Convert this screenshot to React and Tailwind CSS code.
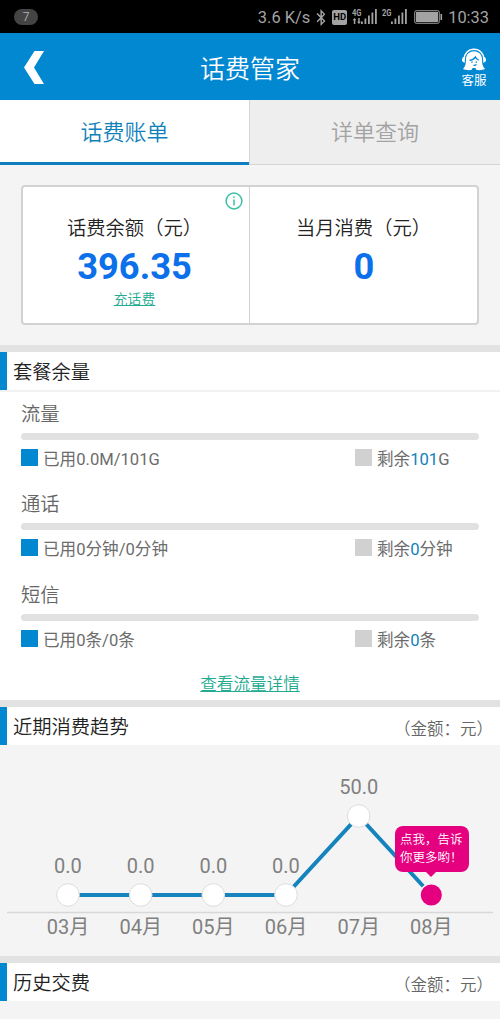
import { FaBluetoothB } from "react-icons/fa";

const usage = [
  { name: "流量", used: "已用0.0M/101G", left: "101", unit: "G" },
  { name: "通话", used: "已用0分钟/0分钟", left: "0", unit: "分钟" },
  { name: "短信", used: "已用0条/0条", left: "0", unit: "条" },
];

const trend = [
  { month: "03月", value: "0.0", x: 68, y: 150 },
  { month: "04月", value: "0.0", x: 140.7, y: 150 },
  { month: "05月", value: "0.0", x: 213.3, y: 150 },
  { month: "06月", value: "0.0", x: 286, y: 150 },
  { month: "07月", value: "50.0", x: 358.7, y: 71 },
  { month: "08月", value: "", x: 431.3, y: 150 },
];

const Signal = ({ label, data }) => (
  <svg className="shrink-0" width="26" height="18" viewBox="0 0 26 18" fill="#a3a3a3">
    <text x="0" y="7.5" fontSize="9.5" fontWeight="700" textLength="9.5" lengthAdjust="spacingAndGlyphs">{label}</text>
    {data && <path d="M2.5 10l2 2.2H3.3V16H1.8v-3.8H.6zM7 16l-2-2.2h1.2V10h1.5v3.8h1.2z" />}
    <rect x="9" y="13.5" width="1.8" height="2.5" />
    <rect x="12.5" y="10.5" width="1.8" height="5.5" />
    <rect x="16" y="7.5" width="1.8" height="8.5" />
    <rect x="19.5" y="4.5" width="1.8" height="11.5" />
    <rect x="23" y="1" width="1.8" height="15" />
  </svg>
);

const StatusBar = () => (
  <div className="flex h-[33px] items-center bg-black pt-px pr-[11px] pl-3.5 text-[#a3a3a3]">
    <div className="flex h-4 w-6 items-center justify-center rounded-full bg-[#444] text-xs">7</div>
    <span className="ml-auto pt-0.5 text-[16.4px]">3.6 K/s</span>
    <FaBluetoothB className="ml-1 h-[17px] w-[14px] shrink-0" />
    <span className="ml-1 flex h-[15px] w-[15px] items-center justify-center rounded-xs bg-[#a3a3a3] text-[9.5px] font-bold text-black">HD</span>
    <div className="ml-[5px] flex gap-1">
      <Signal label="4G" data />
      <Signal label="2G" />
    </div>
    <svg className="ml-1.5 shrink-0" width="29" height="14" viewBox="0 0 29 14" fill="#a3a3a3">
      <rect x=".75" y=".75" width="24.5" height="12.5" rx="1.5" fill="none" stroke="#a3a3a3" />
      <rect x="2" y="2" width="22" height="10" />
      <rect x="26.5" y="4" width="1.6" height="6" />
    </svg>
    <span className="ml-[5px] pt-0.5 text-[16.4px]">10:33</span>
  </div>
);

const Header = () => (
  <header className="grid h-[67px] grid-cols-[100px_1fr_100px] items-center bg-[#0287d1] text-white">
    <svg className="mt-0.5 ml-6" width="21" height="33" viewBox="0 0 21 33" fill="white">
      <path d="M10.5 0H20L10 16.5 20 33h-9.5L0 16.5z" />
    </svg>
    <h1 className="mt-[5px] text-center text-[25px] leading-none font-[350]">话费管家</h1>
    <div className="mr-[13px] flex flex-col items-center justify-self-end pt-1">
      <svg width="26" height="23" viewBox="0 0 26 23">
        <path d="M3.2 11.5C3.2 5 7.5 1.2 13 1.2S22.8 5 22.8 11.5" fill="none" stroke="white" strokeWidth="1.5" />
        <path d="M3.8 8.7C1.8 8.9 1 10.3 1 11.8c0 1.4.8 2.7 2.8 3zM22.2 8.7c2 .2 2.8 1.6 2.8 3.1 0 1.4-.8 2.7-2.8 3z" fill="white" />
        <path d="M13 3.2c-5 0-8 3.6-8 8.2 0 4-.5 6.8-3 9.700 2 1 5.300 1.200 8.500.9l1.100-2h2.800l1.100 2c3.200.3 6.500.1 8.500-.9-2.500-2.900-3-5.700-3-9.700 0-4.600-3-8.200-8-8.200z" fill="white" />
        <path d="M8.500 12.300c2.800-.2 4.700-1.500 6-3.300.7 1.700 1.800 2.600 3.200 3.200" fill="none" stroke="#0287d1" strokeWidth="1.3" />
        <path d="M10.300 14.200h1.400M14.600 14.200H16M12.500 17.200c1.200.3 2.200 0 3-.7" fill="none" stroke="#0287d1" strokeWidth="1.2" />
      </svg>
      <span className="mt-0.5 text-[12.5px] leading-4">客服</span>
    </div>
  </header>
);

const Tabs = () => (
  <div className="flex h-[65px] text-[22px] font-[350]">
    <button className="w-[249px] border-b-3 border-[#0f7fc2] bg-white pt-0.5 text-[#1181ba]">话费账单</button>
    <button className="flex-1 border-b border-l border-[#d5d5d5] bg-[#eee] pt-px text-[#a2a2a2]">详单查询</button>
  </div>
);

const SectionTitle = ({ title, note }) => (
  <div className="flex h-[38px] items-center justify-between border-l-7 border-[#0287d1] bg-white pr-[7px] pl-1.5 font-[350]">
    <h2 className="pt-[5px] text-[19.3px] text-[#222]">{title}</h2>
    {note && <span className="pt-2 text-[16.5px] text-[#666]">{note}</span>}
  </div>
);

const Separator = () => <div className="h-[7px] bg-[#e2e2e2]" />;

const Balance = () => (
  <div className="px-[21px] pt-5 pb-5">
    <div className="flex h-[140px] rounded border-2 border-[#d2d2d2] bg-white text-center">
      <div className="relative w-[227px] border-r border-[#d2d2d2] pt-7">
        <svg className="absolute top-[5px] right-1.5" width="18" height="18" viewBox="0 0 18 18" fill="none" stroke="#3dbfa6" strokeWidth="1.5">
          <circle cx="9" cy="9" r="7.9" />
          <path d="M9 7.5v6M9 4.5v1.5" />
        </svg>
        <p className="pr-[3px] text-[19.3px] leading-7 font-[350] text-[#222]">话费余额（元）</p>
        <p className="pr-[3px] text-[36.3px] leading-[48px] font-bold text-[#0b70ea]">396.35</p>
        <a className="mr-[3px] block text-[13.8px] leading-[17px] font-[350] text-[#22ab91] underline">充话费</a>
      </div>
      <div className="flex-1 pt-7">
        <p className="text-[19.3px] leading-7 font-[350] text-[#222]">当月消费（元）</p>
        <p className="pl-px text-[36.3px] leading-[48px] font-bold text-[#0b70ea]">0</p>
      </div>
    </div>
  </div>
);

const UsageItem = ({ item }) => (
  <div className="h-[90.3px]">
    <p className="h-[41px] pt-[9px] text-[19.3px] leading-7 font-[350] text-[#666]">{item.name}</p>
    <div className="h-[7px] rounded-full bg-[#e1e1e1]" />
    <div className="mt-[9px] flex items-start text-[16.6px] leading-[22px] text-[#6c6c6c]">
      <i className="mr-[5px] h-[17px] w-[17px] bg-[#0287d1]" />
      <span className="w-[312px]">{item.used}</span>
      <i className="mr-[5px] h-[17px] w-[17px] bg-[#d1d1d1]" />
      <span>剩余<span className="text-[#0f7fba]">{item.left}</span>{item.unit}</span>
    </div>
  </div>
);

const TrendChart = () => (
  <div className="relative h-[211px]">
    <svg width="500" height="211" viewBox="0 0 500 211" fontSize="20" textAnchor="middle" fill="#808080">
      <path d="M7 167.5h486" stroke="#d8d8d8" strokeWidth="1.5" />
      <polyline points={trend.map((p) => `${p.x},${p.y}`).join(" ")} fill="none" stroke="#1583bd" strokeWidth="4" />
      {trend.map((p, i) => (
        <g key={p.month}>
          <circle
            cx={p.x}
            cy={p.y}
            r={11.3}
            fill={i === 5 ? "#e4007f" : "white"}
            stroke={i === 5 ? "#f4f4f4" : "#ddd"}
            strokeWidth={i === 5 ? 1.5 : 1}
          />
          <text x={p.x} y={p.y - 22}>{p.value}</text>
          <text x={p.x} y="189">{p.month}</text>
        </g>
      ))}
    </svg>
    <div className="absolute top-[81px] left-[395px] h-[46px] w-[74px] rounded-lg bg-[#e4007f] pt-[5px] pl-[5px] text-[12.5px] leading-[17.5px] font-[350] whitespace-nowrap text-white">
      点我，告诉<br />你更多哟！
      <div className="absolute top-full left-[31px] border-x-5 border-t-5 border-x-transparent border-t-[#e4007f]" />
    </div>
  </div>
);

export default function App() {
  return (
    <div
      lang="zh-CN"
      className="h-[1019px] w-[500px] overflow-hidden bg-[#f4f4f4] font-[Roboto,'Noto_Sans_CJK_SC',sans-serif]"
    >
      <StatusBar />
      <Header />
      <Tabs />
      <Balance />
      <Separator />
      <SectionTitle title="套餐余量" />
      <div className="h-[310px] border-t-2 border-[#f2f2f2] bg-white px-[21px]">
        {usage.map((item) => (
          <UsageItem key={item.name} item={item} />
        ))}
        <div className="pt-2.5 text-center">
          <a className="text-[16.6px] leading-6 font-[350] text-[#22ab91] underline">查看流量详情</a>
        </div>
      </div>
      <Separator />
      <SectionTitle title="近期消费趋势" note="（金额：元）" />
      <TrendChart />
      <Separator />
      <SectionTitle title="历史交费" note="（金额：元）" />
    </div>
  );
}
